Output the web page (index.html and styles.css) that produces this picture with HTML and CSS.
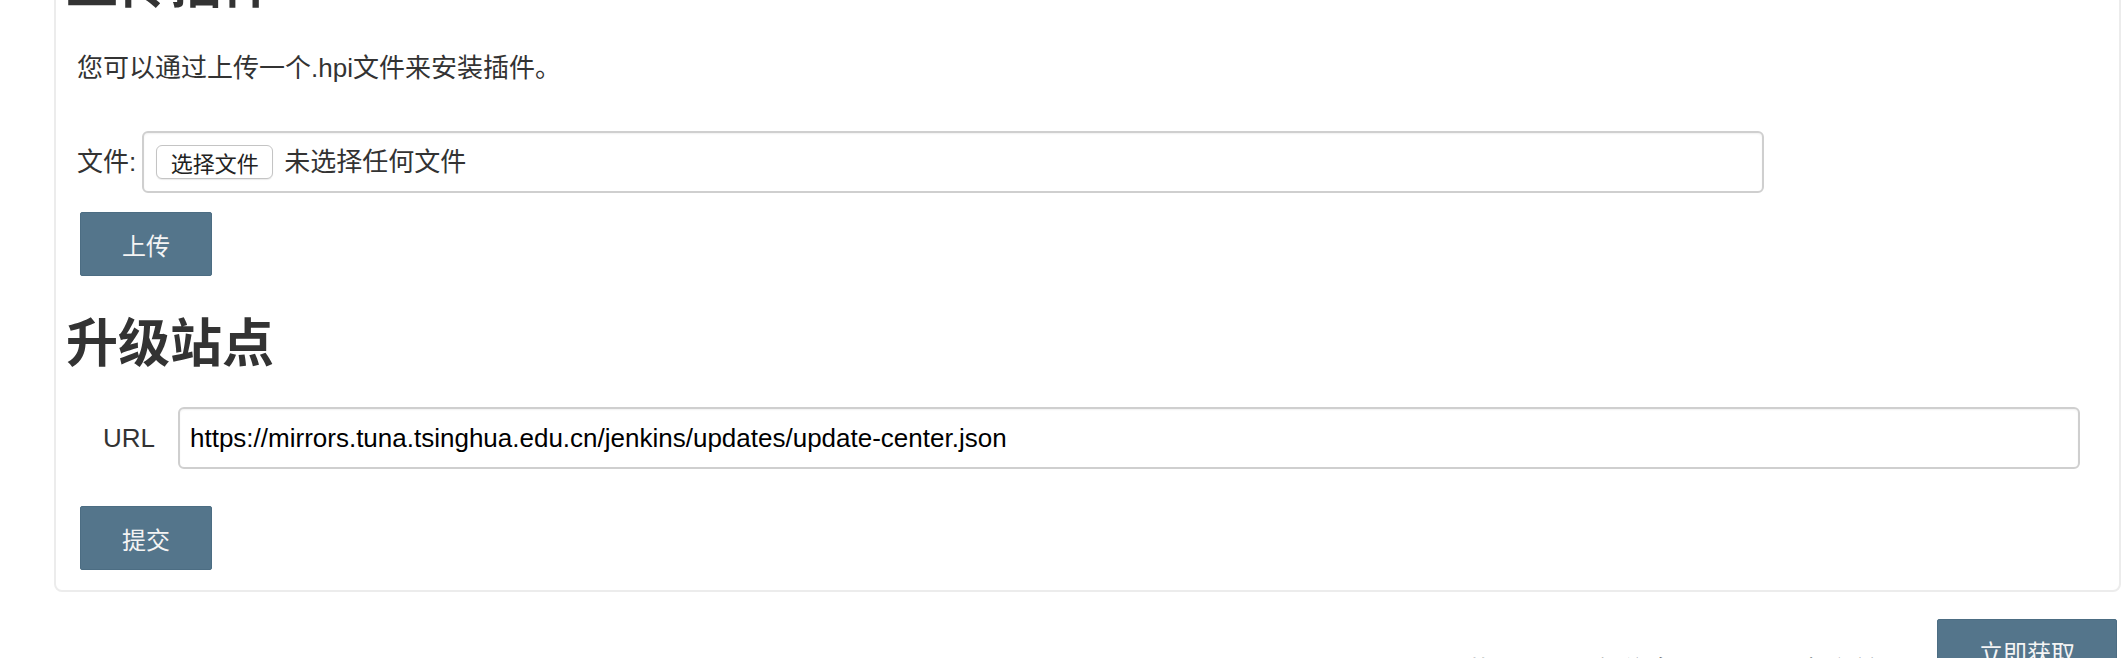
FILE: index.html
```html
<!DOCTYPE html>
<html lang="zh-CN">
<head>
<meta charset="utf-8">
<title>插件管理</title>
<link rel="stylesheet" href="styles.css">
</head>
<body>
<div class="page">
  <section class="panel">
    <h1 class="section-title">上传插件</h1>
    <p class="desc">您可以通过上传一个.hpi文件来安装插件。</p>
    <form class="upload-form">
      <div class="file-row">
        <label class="field-label">文件:</label>
        <div class="file-input">
          <button type="button" class="file-btn">选择文件</button>
          <span class="file-status">未选择任何文件</span>
        </div>
      </div>
      <button type="button" class="primary-btn">上传</button>
    </form>
    <h1 class="section-title second">升级站点</h1>
    <form class="site-form">
      <div class="url-row">
        <label class="url-label">URL</label>
        <input class="url-input" type="text" value="https://mirrors.tuna.tsinghua.edu.cn/jenkins/updates/update-center.json">
      </div>
      <button type="button" class="primary-btn">提交</button>
    </form>
  </section>
  <div class="footer-row">
    <span class="update-info">获取到了更新信息: 15 分 23 秒 之前</span>
    <button type="button" class="primary-btn">立即获取</button>
  </div>
</div>
</body>
</html>
```
FILE: styles.css
```css
* { box-sizing: border-box; }
html, body { margin: 0; padding: 0; background: #fff; overflow: hidden; }
body {
  font-family: "Liberation Sans", "Noto Sans CJK SC", sans-serif;
  color: #333;
  font-size: 26px;
}
.page {
  margin-top: -49px;
  padding: 0 1px 0 54px;
}
.panel {
  border: 2px solid #ececec;
  border-radius: 8px;
  padding: 0 10px 20px 10px;
}
.section-title {
  margin: 0;
  font-size: 52px;
  line-height: 64px;
  font-weight: bold;
  color: #333;
}
.section-title.second { margin-top: 36px; }
.desc {
  margin: 33px 0 0 11px;
  line-height: 36px;
}
.upload-form, .site-form { margin: 0; }
.file-row {
  display: flex;
  align-items: center;
  margin: 45px 0 0 11px;
}
.field-label { margin-right: 6px; line-height: 36px; }
.file-input {
  width: 1622px;
  height: 62px;
  border: 2px solid #cfcfcf;
  border-radius: 6px;
  display: flex;
  align-items: center;
  padding-left: 12px;
  box-shadow: inset 0 1px 2px rgba(0,0,0,0.06);
}
.file-btn {
  height: 34px;
  width: 117px;
  padding: 0;
  font-family: inherit;
  font-size: 22px;
  color: #222;
  background: #fff;
  border: 1px solid #c4c4c4;
  border-radius: 6px;
  box-shadow: 0 1px 1px rgba(0,0,0,0.08);
}
.file-status { margin-left: 11px; line-height: 36px; }
.primary-btn {
  display: block;
  height: 64px;
  padding: 0 41px;
  font-family: inherit;
  font-size: 24px;
  color: #f4f4f4;
  background: #54758b;
  border: 1px solid #4c6d83;
  border-radius: 2px;
}
.upload-form .primary-btn { margin: 19px 0 0 14px; }
.url-row {
  display: flex;
  align-items: center;
  margin: 31px 29px 0 0;
}
.url-label {
  width: 112px;
  padding-left: 37px;
  line-height: 36px;
}
.url-input {
  flex: 1;
  height: 62px;
  border: 2px solid #cfcfcf;
  border-radius: 6px;
  padding: 0 10px;
  font-family: "Liberation Sans", sans-serif;
  font-size: 26px;
  color: #000;
  background: #fff;
  box-shadow: inset 0 1px 2px rgba(0,0,0,0.06);
}
.site-form .primary-btn { margin: 37px 0 0 14px; }
.footer-row {
  display: flex;
  justify-content: flex-end;
  align-items: flex-start;
  margin: 27px 4px 0 0;
}
.update-info {
  margin-top: 34px;
  margin-right: 58px;
  line-height: 36px;
  color: #333;
}
```
